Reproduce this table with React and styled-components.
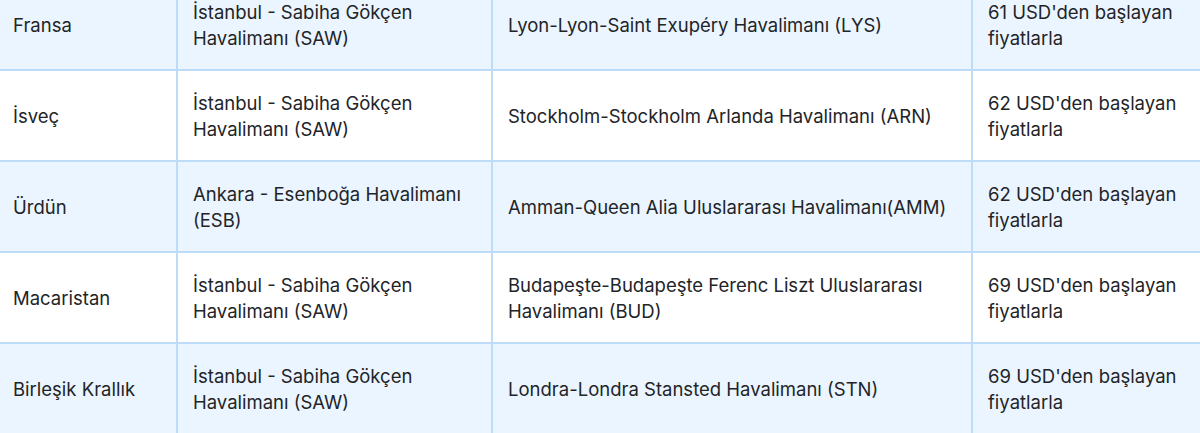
import React from "react";
import styled, { createGlobalStyle } from "styled-components";

const rows = [
  ["Fransa", "İstanbul - Sabiha Gökçen Havalimanı (SAW)", "Lyon-Lyon-Saint Exupéry Havalimanı (LYS)", "61 USD'den başlayan fiyatlarla"],
  ["İsveç", "İstanbul - Sabiha Gökçen Havalimanı (SAW)", "Stockholm-Stockholm Arlanda Havalimanı (ARN)", "62 USD'den başlayan fiyatlarla"],
  ["Ürdün", "Ankara - Esenboğa Havalimanı (ESB)", "Amman-Queen Alia Uluslararası Havalimanı(AMM)", "62 USD'den başlayan fiyatlarla"],
  ["Macaristan", "İstanbul - Sabiha Gökçen Havalimanı (SAW)", "Budapeşte-Budapeşte Ferenc Liszt Uluslararası Havalimanı (BUD)", "69 USD'den başlayan fiyatlarla"],
  ["Birleşik Krallık", "İstanbul - Sabiha Gökçen Havalimanı (SAW)", "Londra-Londra Stansted Havalimanı (STN)", "69 USD'den başlayan fiyatlarla"],
];

function App() {
  return (
    <>
      <GlobalStyle />
      <Page>
        <Table>
          {rows.map((row, i) => (
            <Row key={i} $shaded={i % 2 === 0}>
              {row.map((text, j) => (
                <Cell key={j}>
                  <span>{text}</span>
                </Cell>
              ))}
            </Row>
          ))}
        </Table>
      </Page>
    </>
  );
}

export default App;

const GlobalStyle = createGlobalStyle`
  body {
    margin: 0;
    background: #ffffff;
    font-family: Inter, "Noto Sans", "Liberation Sans", sans-serif;
    overflow: hidden;
  }
`;

const Page = styled.div`
  width: 1200px;
  height: 433px;
  overflow: hidden;
`;

const Table = styled.div`
  margin-top: -20px;
  margin-left: -4px;
  width: 1214px;
  border-left: 2px solid #bcdcf8;
`;

const Row = styled.div`
  display: grid;
  grid-template-columns: 180px 315px 480px 1fr;
  background: ${(p) => (p.$shaded ? "#ebf5ff" : "#ffffff")};
`;

const Cell = styled.div`
  display: flex;
  align-items: center;
  min-height: 52px;
  padding: 19px 15px 18px;
  border-right: 2px solid #bcdcf8;
  border-bottom: 2px solid #bcdcf8;
  font-size: 18.5px;
  line-height: 26px;
  color: #222428;
`;
